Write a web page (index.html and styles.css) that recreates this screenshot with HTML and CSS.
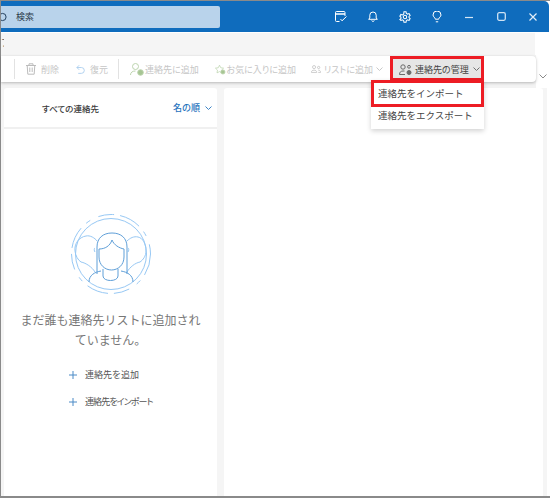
FILE: index.html
```html
<!DOCTYPE html>
<html lang="ja">
<head>
<meta charset="utf-8">
<title>連絡先</title>
<link rel="stylesheet" href="styles.css">
</head>
<body>
<div class="window">
  <header class="titlebar">
    <div class="search">
      <svg class="search-ico" width="7" height="12" viewBox="0 0 7 12"><circle cx="1.500" cy="6" r="3.600" fill="none" stroke="#24415f" stroke-width="1"/></svg>
      <span>検索</span>
    </div>
    <div class="title-icons">
      <span class="cell"><svg width="12" height="11" viewBox="0 0 12 11" fill="none" stroke="#fff" stroke-width="1"><path d="M4.500 10.500H1.500A1 1 0 0 1 .5 9.500V1.500A1 1 0 0 1 1.500 .5H9A1 1 0 0 1 10 1.500V5"/><path d="M.5 3H10" stroke-width="1.500"/><path d="M5.500 8L7 9.800 11.500 5.500"/></svg></span>
      <span class="cell"><svg width="10" height="11" viewBox="0 0 10 11" fill="none" stroke="#fff" stroke-width="1"><path d="M1.800 7V4.200a3.200 3.200 0 0 1 6.400 0V7l1.200 1.300H.6z"/><path d="M3.700 9.500a1.400 1.400 0 0 0 2.600 0"/></svg></span>
      <span class="cell"><svg width="12" height="12" viewBox="0 0 14 14" fill="none" stroke="#fff" stroke-width="1.200"><path d="M5.800 1h2.400l.4 1.800 1.500.8 1.700-.6 1.200 2.100-1.300 1.200v1.400l1.300 1.200-1.200 2.100-1.700-.6-1.500.8-.4 1.800H5.800l-.4-1.800-1.500-.8-1.700.6L1 9.900l1.300-1.200V7.300L1 6.100l1.200-2.100 1.700.6 1.500-.8z"/><circle cx="7" cy="7" r="2"/></svg></span>
      <span class="cell"><svg width="10" height="12" viewBox="0 0 10 12" fill="none" stroke="#fff" stroke-width="1"><path d="M3.300 8.200C3.300 6.600 1 5.800 1 4a4 4 0 0 1 8 0c0 1.800-2.300 2.600-2.300 4.200z"/><path d="M3.800 10.800h2.400"/></svg></span>
      <span class="cell"><svg width="8" height="8" viewBox="0 0 8 8" stroke="#d5e6f5" stroke-width="1.200"><path d="M0 4.500H8"/></svg></span>
      <span class="cell"><svg width="9" height="9" viewBox="0 0 9 9" fill="none" stroke="#cfe2f3" stroke-width="1.300"><rect x=".7" y=".7" width="7.600" height="7.600" rx="1.500"/></svg></span>
      <span class="cell"><svg width="8" height="8" viewBox="0 0 8 8" stroke="#e3eef8" stroke-width="1.200"><path d="M.5 .5L7.500 7.500M7.500 .5L.5 7.500"/></svg></span>
    </div>
  </header>
  <div class="titlegap"></div>
  <div class="menubar"><span class="menu-cut">ブ</span></div>
  <div class="toolbar-row">
    <div class="toolbar-back">
      <div class="toolbar">
        <span class="divider"></span>
        <span class="tool t-del">
          <svg width="10" height="12" viewBox="0 0 10 12" fill="none" stroke="#bcbcbc"><path d="M0 2.500h10M3 2.500V.8h4v1.700M1.200 2.500l.6 8.700h6.400l.6-8.700M3.800 4.500v4.500M6.200 4.500v4.500"/></svg>
          <span>削除</span>
        </span>
        <span class="tool t-res">
          <svg width="10" height="11" viewBox="0 0 10 11" fill="none" stroke="#a9cdee"><path d="M3.500 .8L1 3.300l2.500 2.500M1 3.300h5a3 3 0 0 1 0 6.500H2.500"/></svg>
          <span>復元</span>
        </span>
        <span class="divider d2"></span>
        <span class="tool t-add">
          <svg width="14" height="13" viewBox="0 0 14 13" fill="none" stroke="#bcd4ae"><circle cx="5.500" cy="3.500" r="3"/><path d="M.5 12c0-2.700 2-4 5-4"/><circle cx="10.500" cy="9.500" r="2.800" fill="#a6c593"/></svg>
          <span>連絡先に追加</span>
        </span>
        <span class="tool t-fav">
          <svg width="14" height="13" viewBox="0 0 14 13" fill="none" stroke="#bcd4ae"><path d="M6 .8l1.700 3.400 3.700.5-2.700 2.600.6 3.700L6 9.300 2.700 11l.6-3.700L.6 4.700l3.700-.5z"/><circle cx="10.500" cy="9.800" r="2.800" fill="#a6c593"/></svg>
          <span>お気に入りに追加</span>
        </span>
        <span class="tool t-list">
          <svg width="13" height="10" viewBox="0 0 13 10" fill="none" stroke="#c0c0c0"><circle cx="4" cy="2.500" r="2"/><path d="M.5 9.500c0-2 1.500-3 3.500-3s3.500 1 3.500 3z"/><circle cx="10" cy="3" r="1.500"/><path d="M9.500 6.500c2 0 3 1 3 3H9.500"/></svg>
          <span>リストに追加</span>
          <svg class="chev" width="7" height="4" viewBox="0 0 7 4" fill="none" stroke="#c8c8c8"><path d="M.5 .5L3.500 3.500 6.500 .5"/></svg>
        </span>
        <span class="manage">
          <svg width="13" height="11" viewBox="0 0 13 11" fill="none" stroke="#6a6a6a"><circle cx="4" cy="3" r="2.200"/><path d="M.5 10.500c0-2.500 1.500-3.500 3.500-3.500h1.500M.5 10.500H6"/><circle cx="10" cy="2.800" r="1.400"/><circle cx="10" cy="8.500" r="2" fill="#6a6a6a"/></svg>
          <span>連絡先の管理</span>
          <svg class="chev" width="7" height="4" viewBox="0 0 7 4" fill="none" stroke="#707070"><path d="M.5 .5L3.500 3.500 6.500 .5"/></svg>
        </span>
      </div>
    </div>
    <svg class="more" width="8" height="5" viewBox="0 0 8 5" fill="none" stroke="#8a8a8a"><path d="M.5 .5L4 4 7.500 .5"/></svg>
  </div>
  <main class="panes">
    <section class="list-pane">
      <div class="list-head">
        <span class="all">すべての連絡先</span>
        <span class="sort">名の順</span>
        <svg width="7" height="4" viewBox="0 0 7 4" fill="none" stroke="#3d84c6"><path d="M.5 .5L3.500 3.500 6.500 .5"/></svg>
      </div>
      <div class="empty">
        <svg class="hero" width="80" height="80" viewBox="0 0 80 80" fill="none" stroke="#97c8f4" stroke-width="1">
          <circle cx="40" cy="40" r="35.500"/>
          <circle cx="40" cy="40" r="39.500" stroke-dasharray="22 7 5 9 16 6"/>
          <path d="M26 27c-2-3-7-6-11-5C8 23 3 30 4 37c.5 5 3 9 6 11"/>
          <path d="M24 34c-1 0-1 3 0 4M10 48c5 1 11 5 14 10"/>
          <path d="M56 27c3-3 7-5 11-4 5 1 8 7 8 14 0 5-3 9-6 11"/>
          <path d="M57 34c1 0 1 3 0 4M69 48c-5 1-10 5-13 10"/>
          <g stroke="#5f9fd8">
            <path d="M18 68c0-7 6-10 12-11M62 68c0-7-6-10-12-11"/>
            <path d="M26 60V33c0-9 6-14 15-14s15 5 15 14v27"/>
            <path d="M28 35c6 0 11-3 13-9 2 5 7 8 12 9"/>
            <path d="M28 35v8c0 8 6 13 12.500 13S53 51 53 43v-8"/>
            <path d="M32 55v7c0 6 15 6 15 0v-7"/>
          </g>
        </svg>
        <p class="msg">まだ誰も連絡先リストに追加されていません。</p>
        <div class="act act-1">
          <svg width="8" height="8" viewBox="0 0 8 8" stroke="#4a8ac6"><path d="M4 0V8M0 4H8"/></svg>
          <span>連絡先を追加</span>
        </div>
        <div class="act act-2">
          <svg width="8" height="8" viewBox="0 0 8 8" stroke="#4a8ac6"><path d="M4 0V8M0 4H8"/></svg>
          <span class="tight">連絡先をインポート</span>
        </div>
      </div>
    </section>
    <section class="detail-pane"></section>
  </main>
  <div class="manage-hl" aria-hidden="true"></div>
  <div class="menu">
    <div class="menu-item first">連絡先をインポート</div>
    <div class="menu-item">連絡先をエクスポート</div>
  </div>
</div>
</body>
</html>
```
FILE: styles.css
```css
* { box-sizing: border-box; }
html, body { margin: 0; padding: 0; height: 100%; }
body { background: #fff; font-family: "Noto Sans CJK JP", "Noto Sans", sans-serif; overflow: hidden; }
.window { position: relative; width: 550px; height: 498px; background: #fff; border-left: 1px solid #8a8a8a; border-top: 1px solid #8a8a8a; border-bottom: 2px solid #8a8a8a; display: flex; flex-direction: column; }
.titlebar { width: 548px; height: 31px; background: #0f6cbd; border-radius: 0 5px 0 0; display: flex; align-items: center; flex: none; }
.search { width: 219px; height: 22px; background: #b9d3eb; display: flex; align-items: center; font-size: 9px; color: #2b3a4a; gap: 8px; border-radius: 0 2px 2px 0; }
.search-ico { flex: none; }
.title-icons { margin-left: auto; display: flex; align-items: center; }
.cell { width: 32px; display: flex; align-items: center; justify-content: center; }
.titlegap { height: 1px; flex: none; }
.menubar { width: 534px; height: 22px; background: #f5f5f5; flex: none; font-size: 9px; color: #555; line-height: 10px; padding-top: 5px; }
.menu-cut { display: block; width: 3px; height: 10px; overflow: hidden; }
.toolbar-row { height: 33px; display: flex; flex: none; }
.toolbar-back { width: 535px; height: 33px; background: #f3f3f3; padding-top: 1px; flex: none; }
.toolbar { width: 535px; height: 26px; background: #fff; border-radius: 0 4px 4px 0; box-shadow: 0 1px 3px rgba(0,0,0,.25); display: flex; align-items: center; padding-left: 13px; font-size: 9px; color: #c6c6c6; white-space: nowrap; font-feature-settings: "palt"; }
.divider { width: 1px; height: 20px; background: #e2e2e2; flex: none; }
.tool { display: flex; align-items: center; flex: none; }
.t-del { margin-left: 11px; width: 33px; gap: 5px; }
.t-res { margin-left: 17px; width: 32px; gap: 5px; }
.d2 { margin-left: 10px; }
.t-add { margin-left: 11px; width: 69px; gap: 1px; }
.t-fav { margin-left: 16px; width: 81px; gap: 1px; }
.t-list { margin-left: 15px; width: 75px; gap: 3px; }
.chev { margin-left: auto; flex: none; }
.t-list .chev { margin-right: 3px; }
.manage { margin-left: 6px; width: 91px; height: 22px; background: #e6e6e6; color: #444; display: flex; align-items: center; gap: 3px; padding: 0 3px 0 7px; flex: none; }
.more { margin: 19px 0 0 3px; flex: none; }
.panes { flex: 1; display: flex; gap: 7px; min-height: 0; background: #f5f5f5; margin-right: 3px; padding: 0 4px 0 3px; }
.list-pane { width: 213px; background: #fff; border-radius: 3px 3px 0 0; display: flex; flex-direction: column; flex: none; }
.detail-pane { width: 319px; background: #fff; border-radius: 3px 3px 0 0; flex: none; }
.list-head { height: 41px; border-bottom: 2px solid #f0f0f0; display: flex; align-items: center; padding: 0 5px 0 38px; font-size: 9px; flex: none; }
.all { color: #3a3a3a; font-size: 8.500px; font-weight: 500; font-feature-settings: "palt"; }
.sort { margin-left: auto; color: #1f73bd; font-weight: 500; margin-right: 5px; }
.empty { display: flex; flex-direction: column; align-items: center; }
.hero { margin-top: 85px; }
.msg { margin: 16px 0 0; width: 186px; text-align: center; font-size: 12px; line-height: 20px; color: #777; }
.act { align-self: flex-start; display: flex; align-items: center; gap: 8px; font-size: 9px; color: #555; margin-top: 12px; margin-left: 65px; height: 15px; white-space: nowrap; }
.act-1 { margin-top: 17px; }
.tight { font-feature-settings: "palt"; letter-spacing: -.9px; }
.manage-hl { position: absolute; left: 389px; top: 55px; width: 94px; height: 25px; border: 3px solid #ed1c24; }
.menu { position: absolute; left: 370px; top: 79px; width: 113px; background: #fff; box-shadow: 0 2px 5px rgba(0,0,0,.18); font-size: 9.500px; color: #444; }
.menu-item { height: 22px; line-height: 16px; padding-left: 7px; white-space: nowrap; }
.menu-item.first { height: 27px; border: 3px solid #ed1c24; padding-left: 4px; line-height: 20px; }
```
